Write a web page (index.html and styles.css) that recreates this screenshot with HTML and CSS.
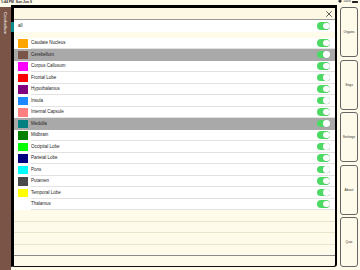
FILE: index.html
```html
<!DOCTYPE html>
<html lang="en">
<head>
    <meta charset="UTF-8">
    <meta name="viewport" content="width=device-width, initial-scale=1.0">
    <title>Brain Regions</title>
    <link rel="stylesheet" href="styles.css">
</head>
<body>
    <div class="status-bar">
        <span class="status-time">1:44 PM&nbsp;&nbsp;Sun Jun 9</span>
        <span class="status-right">
            <svg class="wifi" width="4" height="3" viewBox="0 0 8 6"><path d="M4 6 L0 2 A6 6 0 0 1 8 2 Z" fill="#222"/></svg>
            <span>100%</span>
            <span class="battery"></span>
        </span>
    </div>

    <div class="app">
        <div class="side-left">
            <span class="side-title">Cerebellum</span>
        </div>
        <div class="side-marker"></div>

        <div class="panel">
            <div class="panel-header">
                <svg class="close-icon" width="6" height="6" viewBox="0 0 6 6">
                    <path d="M0.5 0.5 L5.5 5.5 M5.5 0.5 L0.5 5.5" stroke="#333" stroke-width="0.8" stroke-linecap="round"/>
                </svg>
            </div>

            <div class="search-row">
                <span class="search-text">all</span>
                <span class="toggle"></span>
            </div>

            <div class="spacer"></div>

            <div class="list">
                <div class="row"><span class="swatch" style="background:#ffa500"></span><div class="row-body"><span>Caudate Nucleus</span><span class="toggle"></span></div></div>
                <div class="row selected"><span class="swatch" style="background:#7a5547"></span><div class="row-body"><span>Cerebellum</span><span class="toggle"></span></div></div>
                <div class="row"><span class="swatch" style="background:#ff00ff"></span><div class="row-body"><span>Corpus Callosum</span><span class="toggle"></span></div></div>
                <div class="row"><span class="swatch" style="background:#ff0000"></span><div class="row-body"><span>Frontal Lobe</span><span class="toggle"></span></div></div>
                <div class="row"><span class="swatch" style="background:#800080"></span><div class="row-body"><span>Hypothalamus</span><span class="toggle"></span></div></div>
                <div class="row"><span class="swatch" style="background:#1e88ff"></span><div class="row-body"><span>Insula</span><span class="toggle"></span></div></div>
                <div class="row"><span class="swatch" style="background:#ff8080"></span><div class="row-body"><span>Internal Capsule</span><span class="toggle"></span></div></div>
                <div class="row selected"><span class="swatch" style="background:#008080"></span><div class="row-body"><span>Medulla</span><span class="toggle"></span></div></div>
                <div class="row"><span class="swatch" style="background:#008000"></span><div class="row-body"><span>Midbrain</span><span class="toggle"></span></div></div>
                <div class="row"><span class="swatch" style="background:#00ff00"></span><div class="row-body"><span>Occipital Lobe</span><span class="toggle"></span></div></div>
                <div class="row"><span class="swatch" style="background:#000080"></span><div class="row-body"><span>Parietal Lobe</span><span class="toggle"></span></div></div>
                <div class="row"><span class="swatch" style="background:#00ffff"></span><div class="row-body"><span>Pons</span><span class="toggle"></span></div></div>
                <div class="row"><span class="swatch" style="background:#4a4a4a"></span><div class="row-body"><span>Putamen</span><span class="toggle"></span></div></div>
                <div class="row"><span class="swatch" style="background:#ffff00"></span><div class="row-body"><span>Temporal Lobe</span><span class="toggle"></span></div></div>
                <div class="row"><span class="swatch"></span><div class="row-body"><span>Thalamus</span><span class="toggle"></span></div></div>
                <div class="empty-row"></div>
                <div class="empty-row"></div>
                <div class="empty-row"></div>
            </div>

            <div class="footer-gap"></div>
            <div class="footer"></div>
        </div>

        <div class="nav">
            <button class="nav-button">Organs</button>
            <button class="nav-button">Segs</button>
            <button class="nav-button">Settings</button>
            <button class="nav-button">About</button>
            <button class="nav-button">Quiz</button>
        </div>
    </div>
</body>
</html>
```

FILE: styles.css
```css
html, body {
    margin: 0;
    padding: 0;
}

body {
    font-family: "Liberation Sans", Arial, sans-serif;
    width: 360px;
    height: 270px;
    overflow: hidden;
    background-color: #fffbea;
    color: #222;
}

.status-bar {
    height: 5px;
    display: flex;
    justify-content: space-between;
    align-items: center;
    padding: 0 2px 0 1px;
    font-size: 3.4px;
    font-weight: bold;
    line-height: 5px;
}

.status-time {
    margin-top: -1px;
}

.status-right {
    display: flex;
    align-items: center;
    gap: 1px;
    margin-top: -2px;
    font-weight: normal;
    font-size: 3px;
}

.battery {
    width: 6px;
    height: 2px;
    background-color: #222;
    border-radius: 0.5px;
}

.app {
    position: relative;
    display: flex;
    height: 265px;
}

.side-left {
    width: 11px;
    margin-top: 2px;
    background-color: #7a5547;
    display: flex;
    justify-content: center;
}

.side-title {
    writing-mode: vertical-rl;
    color: #fff;
    font-size: 4.3px;
    margin-top: 5px;
    line-height: 11px;
}

.side-marker {
    position: absolute;
    left: 11px;
    top: 17px;
    width: 3px;
    height: 10px;
    background-color: #0b8a8a;
}

.panel {
    flex: 1;
    display: flex;
    flex-direction: column;
    height: 258px;
    border-top: 3px solid #000;
    border-left: 3px solid #000;
    border-right: 2px solid #000;
    border-bottom: 1px solid #111;
    border-bottom-right-radius: 3px;
    background-color: #fffbea;
}

.panel-header {
    height: 11px;
    display: flex;
    justify-content: flex-end;
    align-items: center;
    padding-right: 3px;
    border-bottom: 1px solid #999;
    background-color: #fdf8e4;
}

.close-icon {
    display: block;
}

.search-row {
    height: 11.5px;
    display: flex;
    align-items: center;
    justify-content: space-between;
    padding: 0 5px 0 4px;
    background-color: #fff;
    font-size: 4.5px;
}

.spacer {
    height: 6px;
}

.row {
    height: 11.5px;
    display: flex;
    align-items: center;
    background-color: #fff;
    font-size: 4.5px;
}

.row.selected {
    background-color: #a9a9a9;
}

.swatch {
    width: 9.5px;
    height: 8.5px;
    margin: 0 3.5px 0 4px;
    flex-shrink: 0;
}

.row-body {
    flex: 1;
    height: 100%;
    display: flex;
    align-items: center;
    justify-content: space-between;
    padding-right: 5px;
    box-sizing: border-box;
    border-bottom: 0.5px solid #e2e2e2;
}

.row.selected .row-body {
    border-bottom-color: #a9a9a9;
}

.toggle {
    position: relative;
    width: 13px;
    height: 7.5px;
    border-radius: 4px;
    background-color: #4cd964;
    flex-shrink: 0;
}

.toggle::after {
    content: "";
    position: absolute;
    right: 0.5px;
    top: 0.5px;
    width: 6.5px;
    height: 6.5px;
    border-radius: 50%;
    background-color: #fff;
    box-shadow: 0 0.3px 0.6px rgba(0,0,0,0.3);
}

.empty-row {
    height: 11.5px;
    box-sizing: border-box;
    border-bottom: 0.5px solid #ebe4cc;
}

.footer-gap {
    height: 10px;
}

.footer {
    flex: 1;
    border-top: 1px solid #8a8a8a;
}

.nav {
    width: 23px;
    display: flex;
    flex-direction: column;
    gap: 2.5px;
    padding: 2px 0 0 3px;
    box-sizing: border-box;
}

.nav-button {
    width: 18px;
    height: 50px;
    padding: 0;
    background-color: #fffbea;
    border: 0.7px solid #666;
    border-radius: 3px;
    font-family: "Liberation Sans", Arial, sans-serif;
    font-size: 3.4px;
    color: #333;
}
```
